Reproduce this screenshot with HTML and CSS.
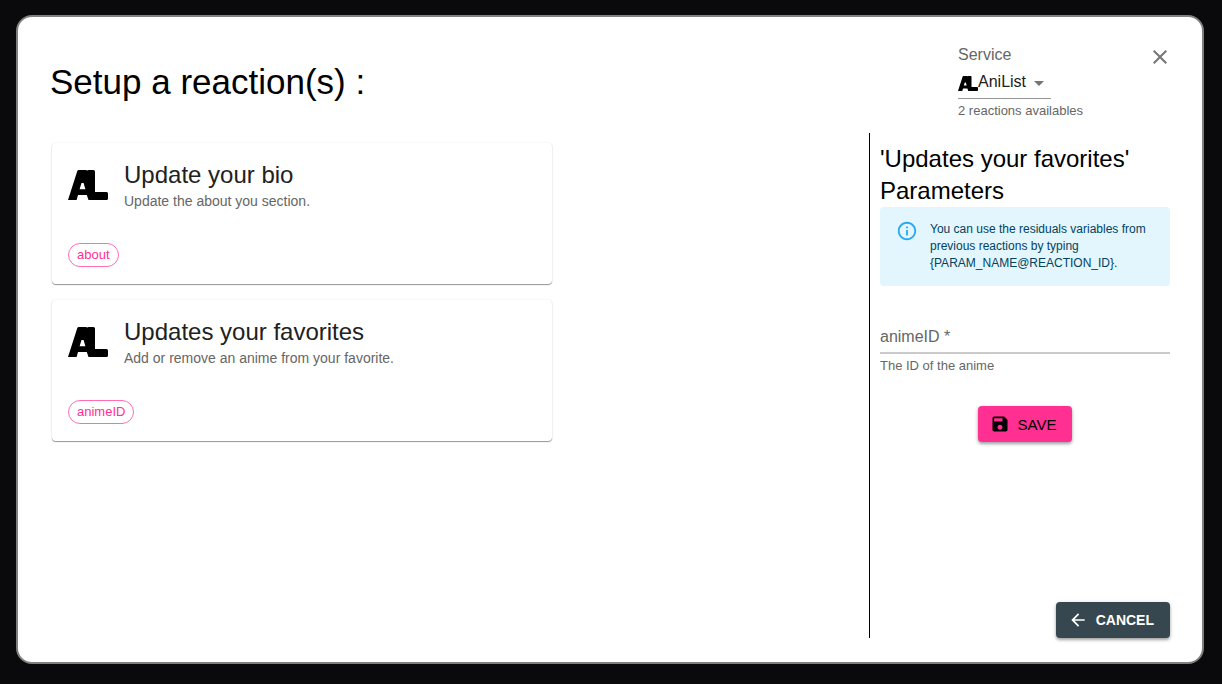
FILE: index.html
```html
<!DOCTYPE html>
<html lang="en">
<head>
<meta charset="utf-8">
<meta name="viewport" content="width=device-width, initial-scale=1">
<title>Setup a reaction</title>
<link rel="stylesheet" href="styles.css">
</head>
<body>
<svg class="sprite" aria-hidden="true">
  <symbol id="anilist" viewBox="0 0 40 30">
    <path fill-rule="evenodd" d="M9.300 1Q9.700 0 10.700 0H17.800Q18.700 0 19.200 .6Q19.800 0 20.600 0H25.500Q27 0 27 1.500V22H38.500Q40 22 40 23.500V28.500Q40 30 38.500 30H20.500L18.800 25H10L8.600 30H0ZM13.500 13L11.600 19.200H17.400L15.600 13Z"/>
  </symbol>
</svg>
<main class="modal">
  <header class="header">
    <h1 class="title">Setup a reaction(s) :</h1>
    <div class="service">
      <label class="service-label" for="service">Service</label>
      <div class="service-field">
        <svg class="logo-small"><use href="#anilist"/></svg>
        <select id="service" class="select"><option>AniList</option></select>
        <svg class="caret" viewBox="0 0 24 24"><path d="M7 10l5 5 5-5z"/></svg>
      </div>
      <p class="helper">2 reactions availables</p>
    </div>
    <button class="close" type="button" aria-label="Close">
      <svg viewBox="0 0 24 24"><path d="M19 6.410 17.590 5 12 10.590 6.410 5 5 6.410 10.590 12 5 17.590 6.410 19 12 13.410 17.590 19 19 17.590 13.410 12z"/></svg>
    </button>
  </header>
  <div class="content">
    <section class="cards">
      <article class="card">
        <div class="card-head">
          <svg class="logo"><use href="#anilist"/></svg>
          <div>
            <h2 class="card-title">Update your bio</h2>
            <p class="card-text">Update the about you section.</p>
          </div>
        </div>
        <span class="chip">about</span>
      </article>
      <article class="card">
        <div class="card-head">
          <svg class="logo"><use href="#anilist"/></svg>
          <div>
            <h2 class="card-title">Updates your favorites</h2>
            <p class="card-text">Add or remove an anime from your favorite.</p>
          </div>
        </div>
        <span class="chip">animeID</span>
      </article>
    </section>
    <form class="params">
      <h2 class="params-title">'Updates your favorites' Parameters</h2>
      <div class="alert">
        <svg class="alert-icon" viewBox="0 0 24 24"><path d="M11 7h2v2h-2zm0 4h2v6h-2zm1-9C6.480 2 2 6.480 2 12s4.480 10 10 10 10-4.480 10-10S17.520 2 12 2zm0 18c-4.410 0-8-3.590-8-8s3.590-8 8-8 8 3.590 8 8-3.590 8-8 8z"/></svg>
        <p class="alert-text">You can use the residuals variables from previous reactions by typing {PARAM_NAME@REACTION_ID}.</p>
      </div>
      <div class="field">
        <label class="field-label" for="anime">animeID *</label>
        <input id="anime" class="input" type="text" aria-describedby="anime-help">
      </div>
      <p id="anime-help" class="helper">The ID of the anime</p>
      <button class="button save" type="button">
        <svg viewBox="0 0 24 24"><path d="M17 3H5c-1.110 0-2 .9-2 2v14c0 1.100.89 2 2 2h14c1.100 0 2-.9 2-2V7l-4-4zm-5 16c-1.660 0-3-1.340-3-3s1.340-3 3-3 3 1.340 3 3-1.340 3-3 3zm3-10H5V5h10v4z"/></svg>
        SAVE
      </button>
      <button class="button cancel" type="button">
        <svg viewBox="0 0 24 24"><path d="M20 11H7.830l5.590-5.590L12 4l-8 8 8 8 1.410-1.410L7.830 13H20v-2z"/></svg>
        CANCEL
      </button>
    </form>
  </div>
</main>
</body>
</html>
```
FILE: styles.css
```css
* { box-sizing: border-box; }

body {
  display: flex;
  min-height: 100vh;
  margin: 0;
  padding: 15px 18px 20px 16px;
  background: #0a0a0c;
  color: #000;
  font-family: "Liberation Sans", Arial, sans-serif;
}

h1, h2, p { margin: 0; font-weight: 400; }

button, input, select { font-family: inherit; }

.sprite { position: absolute; width: 0; height: 0; }

.modal {
  display: flex;
  flex: 1;
  flex-direction: column;
  padding: 24px 32px;
  background: #fff;
  border: 2px solid #808080;
  border-radius: 16px;
}

.header {
  display: flex;
  align-items: flex-start;
  min-height: 92px;
}

.title {
  flex: 1;
  padding-top: 20px;
  font-size: 35px;
  line-height: 42px;
}

.service { width: 186px; }

.service-label {
  display: block;
  padding-top: 4px;
  color: #666;
  font-size: 16px;
  line-height: 20px;
}

.service-field {
  display: flex;
  align-items: center;
  width: 93px;
  height: 34px;
  border-bottom: 1px solid #949494;
}

.logo-small { width: 20px; height: 15px; margin-top: 3px; }

.select {
  flex: 1;
  min-width: 0;
  padding: 0;
  border: 0;
  background: none;
  appearance: none;
  color: #212121;
  font-size: 16px;
  line-height: 23px;
}

.caret { width: 24px; height: 24px; margin-top: 3px; fill: #757575; }

.helper {
  padding-top: 2px;
  color: #666;
  font-size: 13px;
  line-height: 20px;
}

.close {
  width: 32px;
  height: 32px;
  margin-right: -6px;
  padding: 4px;
  border: 0;
  background: none;
}

.close svg { display: block; width: 24px; height: 24px; fill: #757575; }

.content { display: flex; flex: 1; }

.cards {
  display: flex;
  flex: 1;
  flex-direction: column;
  gap: 16px;
  padding: 10px 2px;
}

.card {
  width: 100%;
  max-width: 500px;
  padding: 15px 16px 17px;
  border-radius: 4px;
  box-shadow: 0 1px 1px rgba(0, 0, 0, 0.4), 0 0 2px rgba(0, 0, 0, 0.1);
}

.card-head { display: flex; align-items: center; gap: 16px; height: 53px; }

.logo { width: 40px; height: 30px; }

.card-title { color: #212121; font-size: 24px; line-height: 32px; }

.card-text { color: #666; font-size: 14px; line-height: 20px; }

.chip {
  display: inline-block;
  height: 24px;
  margin-top: 32px;
  padding: 0 8px;
  border: 1px solid #ff6db3;
  border-radius: 12px;
  color: #ff3091;
  font-size: 13px;
  line-height: 22px;
  vertical-align: top;
}

.params {
  display: flex;
  flex-direction: column;
  width: 301px;
  padding: 10px 0 0 10px;
  border-left: 1px solid #000;
}

.params-title { font-size: 24px; line-height: 32px; }

.alert {
  display: flex;
  gap: 12px;
  padding: 14px 16px;
  background: #e3f5fd;
  border-radius: 4px;
}

.alert-icon { flex: none; width: 22px; height: 22px; margin-top: -1px; fill: #29a8f5; }

.alert-text { color: #014361; font-size: 12px; line-height: 17px; }

.field { position: relative; margin-top: 35px; }

.field-label {
  position: absolute;
  top: 4px;
  left: 0;
  color: #666;
  font-size: 16px;
  line-height: 24px;
}

.input {
  display: block;
  width: 100%;
  height: 33px;
  padding: 0;
  border: 0;
  border-bottom: 2px solid #cacaca;
  background: none;
  font-size: 16px;
}

.button {
  display: flex;
  align-items: center;
  gap: 8px;
  height: 36px;
  padding: 0 16px 0 12px;
  border: 0;
  border-radius: 4px;
  box-shadow: 0 2px 3px rgba(0, 0, 0, 0.3), 0 1px 5px rgba(0, 0, 0, 0.12);
  font-size: 15px;
  font-weight: 400;
}

.button svg { width: 20px; height: 20px; fill: currentColor; }

.save {
  align-self: center;
  margin-top: 30px;
  background: #ff3091;
  color: #000;
}

.cancel {
  align-self: flex-end;
  margin-top: auto;
  background: #37474f;
  color: #fff;
  font-size: 14px;
  font-weight: 700;
}
```
